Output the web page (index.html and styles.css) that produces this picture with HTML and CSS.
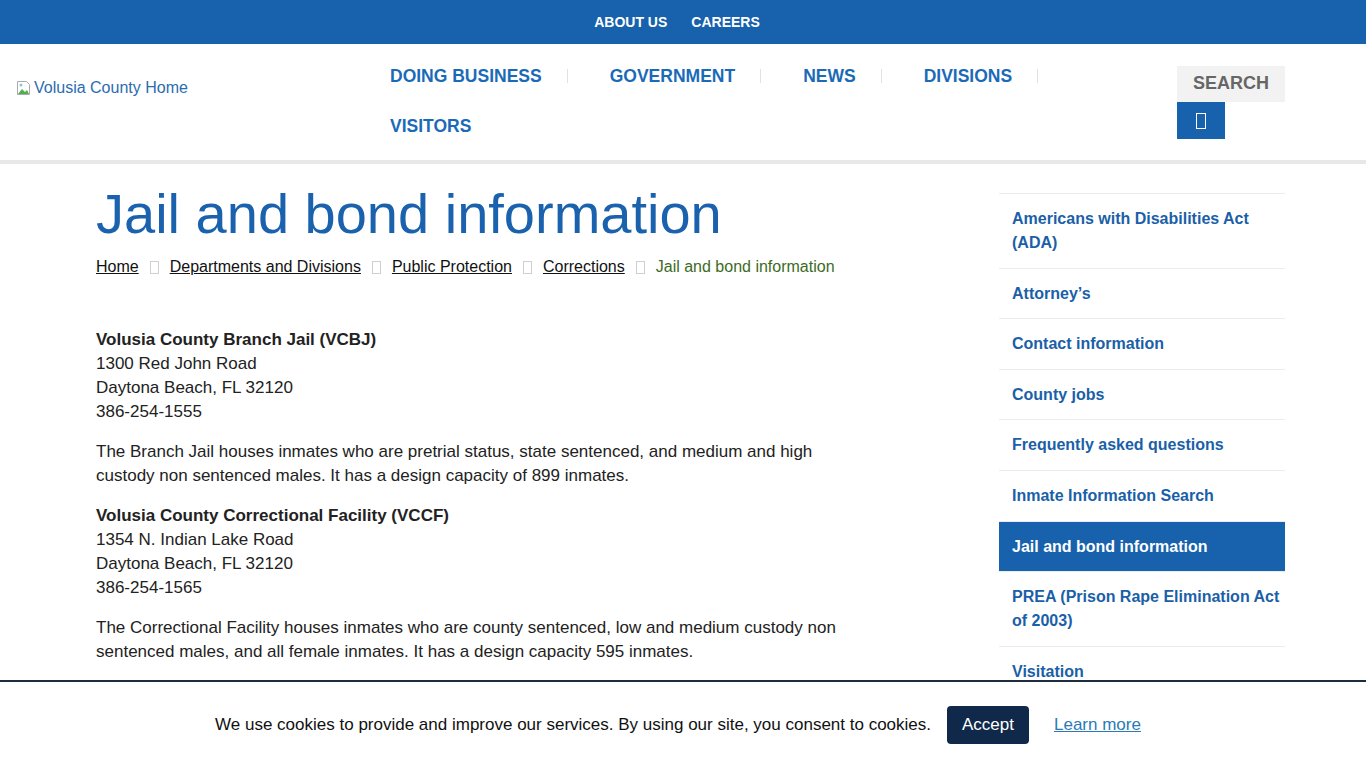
FILE: index.html
```html
<!DOCTYPE html>
<html lang="en">

<head>
  <meta charset="UTF-8">
  <meta name="viewport" content="width=device-width, initial-scale=1.0">
  <title>Jail and bond information | Volusia County</title>
  <link rel="stylesheet" href="styles.css">
</head>

<body>
  <div class="topbar">
    <a href="#">ABOUT US</a>
    <a href="#">CAREERS</a>
  </div>

  <header class="masthead">
    <a class="logo" href="#">
      <svg class="broken" width="16" height="16" viewBox="0 0 16 16" aria-hidden="true">
        <path d="M1.5 1.5h9l3 3v10h-12z" fill="#fff" stroke="#aaa" />
        <path d="M2 14l4-5 3 3 2-2 2 4z" fill="#4caf50" />
        <circle cx="5" cy="5" r="1.5" fill="#8ec0e8" />
      </svg>Volusia County Home
    </a>
    <nav class="mainnav">
      <ul>
        <li><a href="#">DOING BUSINESS</a></li>
        <li><a href="#">GOVERNMENT</a></li>
        <li><a href="#">NEWS</a></li>
        <li><a href="#">DIVISIONS</a></li>
        <li><a href="#">VISITORS</a></li>
      </ul>
    </nav>
    <form class="search">
      <span class="search-label">SEARCH</span>
      <button type="button" class="search-btn"><span class="tofu"></span></button>
    </form>
  </header>

  <div class="page">
    <main class="content">
      <h1>Jail and bond information</h1>
      <ol class="crumbs">
        <li><a href="#">Home</a></li>
        <li><a href="#">Departments and Divisions</a></li>
        <li><a href="#">Public Protection</a></li>
        <li><a href="#">Corrections</a></li>
        <li class="current">Jail and bond information</li>
      </ol>

      <div class="body">
        <p><strong>Volusia County Branch Jail (VCBJ)</strong><br>
          1300 Red John Road<br>
          Daytona Beach, FL 32120<br>
          386-254-1555</p>
        <p>The Branch Jail houses inmates who are pretrial status, state sentenced, and medium and high custody non
          sentenced males. It has a design capacity of 899 inmates.</p>
        <p><strong>Volusia County Correctional Facility (VCCF)</strong><br>
          1354 N. Indian Lake Road<br>
          Daytona Beach, FL 32120<br>
          386-254-1565</p>
        <p>The Correctional Facility houses inmates who are county sentenced, low and medium custody non sentenced
          males, and all female inmates. It has a design capacity 595 inmates.</p>
      </div>
    </main>

    <aside class="sidenav">
      <a href="#">Americans with Disabilities Act (ADA)</a>
      <a href="#">Attorney’s</a>
      <a href="#">Contact information</a>
      <a href="#">County jobs</a>
      <a href="#">Frequently asked questions</a>
      <a href="#">Inmate Information Search</a>
      <a href="#" class="active">Jail and bond information</a>
      <a href="#">PREA (Prison Rape Elimination Act of 2003)</a>
      <a href="#">Visitation</a>
    </aside>
  </div>

  <div class="cookies">
    <span>We use cookies to provide and improve our services. By using our site, you consent to cookies.</span>
    <button type="button" class="accept">Accept</button>
    <a href="#" class="learn">Learn more</a>
  </div>
</body>

</html>
```

FILE: styles.css
```css
* {
  box-sizing: border-box;
}

body {
  margin: 0;
  font-family: "Liberation Sans", Arial, sans-serif;
  color: #222;
  background: #fff;
}

a {
  text-decoration: none;
}

/* top utility bar */
.topbar {
  height: 44px;
  padding-right: 12px;
  background: #1761ad;
  display: flex;
  justify-content: center;
  align-items: center;
  gap: 24px;
}

.topbar a {
  color: #fff;
  font-weight: bold;
  font-size: 14px;
}

/* masthead */
.masthead {
  height: 120px;
  border-bottom: 4px solid #e8e8e8;
  display: flex;
  align-items: flex-start;
}

.logo {
  margin: 36px 0 0 16px;
  width: 374px;
  font-size: 16px;
  color: #2b6cb0;
  display: flex;
  align-items: center;
  height: 16px;
}

.broken {
  margin-right: 2px;
}

.mainnav {
  width: 787px;
  padding-top: 7px;
}

.mainnav ul {
  list-style: none;
  margin: 0;
  padding: 0;
  display: flex;
  flex-wrap: wrap;
}

.mainnav li {
  line-height: 50px;
  margin-right: 42px;
  display: flex;
  align-items: center;
}

.mainnav li::after {
  content: "";
  width: 1px;
  height: 14px;
  background: #e2e2e2;
  margin-left: 25px;
}

.mainnav li:last-child::after {
  display: none;
}

.mainnav a {
  color: #1b6ab8;
  font-weight: bold;
  font-size: 17.5px;
}

.search {
  margin-top: 22px;
  width: 108px;
}

.search-label {
  display: block;
  height: 36px;
  line-height: 34px;
  background: #f2f2f2;
  color: #666;
  font-weight: bold;
  font-size: 18px;
  text-align: center;
}

.search-btn {
  display: flex;
  justify-content: center;
  align-items: center;
  width: 48px;
  height: 37px;
  border: 0;
  background: #1761ad;
  padding: 0;
}

.tofu {
  display: block;
  width: 10px;
  height: 16px;
  border: 1px solid #fff;
}

/* page body */
.page {
  display: grid;
  grid-template-columns: 1fr 286px;
  margin: 0 81px 0 96px;
}

.content {
  padding-top: 14px;
  max-width: 760px;
}

h1 {
  margin: 0;
  font-weight: normal;
  font-size: 56px;
  line-height: 72px;
  color: #1a62ad;
}

.crumbs {
  list-style: none;
  margin: 5px 0 0;
  padding: 0;
  display: flex;
  font-size: 16px;
  line-height: 24px;
  white-space: nowrap;
}

.crumbs li {
  display: flex;
  align-items: center;
  flex-shrink: 0;
}

.crumbs li + li::before {
  content: "";
  width: 7px;
  height: 11px;
  border: 1px solid #d0d0d0;
  margin: 0 11px;
}

.crumbs a {
  color: #111;
  text-decoration: underline;
}

.crumbs .current {
  color: #3d6b25;
}

.body {
  margin-top: 49px;
  font-size: 17px;
  line-height: 24px;
  color: #222;
}

.body p {
  margin: 0 0 16px;
}

/* side navigation */
.sidenav {
  margin-top: 29px;
  border-top: 1px solid #ececec;
  display: flex;
  flex-direction: column;
  align-self: start;
}

.sidenav a {
  padding: 13px 4px 12.6px 13px;
  border-bottom: 1px solid #ececec;
  color: #1a5fa8;
  font-weight: bold;
  font-size: 16px;
  line-height: 24px;
}

.sidenav a.active {
  background: #1761ad;
  color: #fff;
}

/* cookie banner */
.cookies {
  position: fixed;
  left: 0;
  right: 0;
  bottom: 0;
  height: 88px;
  padding-right: 10px;
  background: #fff;
  border-top: 2px solid #1d2d3d;
  display: flex;
  justify-content: center;
  align-items: center;
  font-size: 17px;
  color: #111;
}

.accept {
  margin-left: 16px;
  width: 82px;
  height: 38px;
  border: 0;
  border-radius: 4px;
  background: #10294a;
  color: #fff;
  font: inherit;
}

.learn {
  margin-left: 25px;
  color: #2a7ab8;
  text-decoration: underline;
}
```
